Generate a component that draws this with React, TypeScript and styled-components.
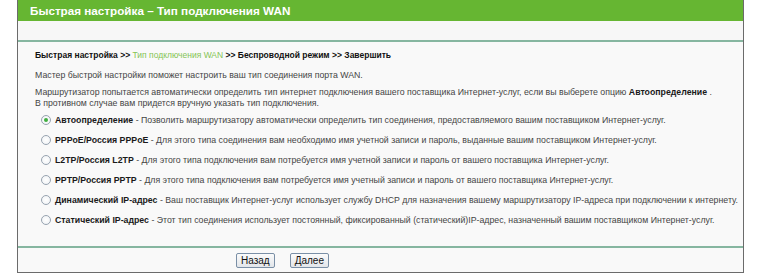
import React, { useState } from "react";
import styled, { createGlobalStyle } from "styled-components";

const Global = createGlobalStyle`
  html, body { margin: 0; padding: 0; background: #ffffff; }
  body { font-family: "Liberation Sans", Arial, sans-serif; }
`;

const Frame = styled.div`
  margin-left: 17px;
  width: 725px;
  border-left: 1px solid #6b6b6b;
  border-right: 1px solid #6b6b6b;
  border-bottom: 1px solid #6b6b6b;
  background: #f9f9f9;
`;

const Title = styled.div`
  height: 21px;
  background: #66b632;
  color: #ffffff;
  font-weight: bold;
  font-size: 11.7px;
  line-height: 21px;
  padding-left: 12px;
`;

const Spacer = styled.div`
  height: 19px;
  background: #f7f7f7;
  border-bottom: 2px solid #86b6a0;
`;

const Content = styled.div`
  padding: 8px 0 20px 17px;
  font-size: 8.75px;
  color: #444444;
  line-height: 11px;
  white-space: nowrap;
`;

const Crumbs = styled.div`
  height: 11px;
  font-size: 8.5px;
  color: #111111;
  font-weight: bold;
`;

const CrumbActive = styled.span`
  color: #84c454;
  font-weight: normal;
`;

const Para = styled.p<{ $gap: number }>`
  margin: ${(p) => p.$gap}px 0 0 0;
  line-height: 11px;
`;

const Bold = styled.b`
  color: #1a1a1a;
`;

const Options = styled.div`
  margin-top: 5px;
  padding-left: 6px;
  display: flex;
  flex-direction: column;
  gap: 8px;
`;

const Option = styled.label`
  display: flex;
  align-items: center;
  height: 12px;
  gap: 4px;
`;

const Radio = styled.span<{ $on: boolean }>`
  width: 8px;
  height: 8px;
  border-radius: 50%;
  border: 1px solid #97a3b0;
  background: radial-gradient(circle, #ffffff 0%, #eef1f4 100%);
  display: flex;
  align-items: center;
  justify-content: center;
  flex: none;
  &::after {
    content: "";
    width: 4px;
    height: 4px;
    border-radius: 50%;
    background: ${(p) => (p.$on ? "#3fae3f" : "transparent")};
  }
`;

const Footer = styled.div`
  border-top: 2px solid #86b6a0;
  height: 24px;
  display: flex;
  align-items: center;
  gap: 15px;
  padding-left: 218px;
`;

const Button = styled.button`
  font-family: "Liberation Sans", Arial, sans-serif;
  font-size: 10px;
  height: 15px;
  padding: 0 4px;
  border: 1px solid #7a8fa6;
  border-radius: 2px;
  background: linear-gradient(#fbfbfb, #e3e6ea);
  color: #111111;
  line-height: 13px;
`;

const options = [
  {
    name: "Автоопределение",
    text: "Позволить маршрутизатору автоматически определить тип соединения, предоставляемого вашим поставщиком Интернет-услуг.",
  },
  {
    name: "PPPoE/Россия PPPoE",
    text: "Для этого типа соединения вам необходимо имя учетной записи и пароль, выданные вашим поставщиком Интернет-услуг.",
  },
  {
    name: "L2TP/Россия L2TP",
    text: "Для этого типа подключения вам потребуется имя учетной записи и пароль от вашего поставщика Интернет-услуг.",
  },
  {
    name: "PPTP/Россия PPTP",
    text: "Для этого типа подключения вам потребуется имя учетный записи и пароль от вашего поставщика Интернет-услуг.",
  },
  {
    name: "Динамический IP-адрес",
    text: "Ваш поставщик Интернет-услуг использует службу DHCP для назначения вашему маршрутизатору IP-адреса при подключении к интернету.",
  },
  {
    name: "Статический IP-адрес",
    text: "Этот тип соединения использует постоянный, фиксированный (статический)IP-адрес, назначенный вашим поставщиком Интернет-услуг.",
  },
];

export default function App() {
  const [sel, setSel] = useState(0);
  return (
    <>
      <Global />
      <Frame>
        <Title>Быстрая настройка – Тип подключения WAN</Title>
        <Spacer />
        <Content>
          <Crumbs>
            Быстрая настройка &gt;&gt; <CrumbActive>Тип подключения WAN</CrumbActive> &gt;&gt; Беспроводной режим &gt;&gt; Завершить
          </Crumbs>
          <Para $gap={9}>Мастер быстрой настройки поможет настроить ваш тип соединения порта WAN.</Para>
          <Para $gap={6}>
            Маршрутизатор попытается автоматически определить тип интернет подключения вашего поставщика Интернет-услуг, если вы выберете опцию <Bold>Автоопределение</Bold> .
            <br />
            В противном случае вам придется вручную указать тип подключения.
          </Para>
          <Options>
            {options.map((o, i) => (
              <Option key={o.name} onClick={() => setSel(i)}>
                <Radio $on={sel === i} />
                <span>
                  <Bold>{o.name}</Bold> - {o.text}
                </span>
              </Option>
            ))}
          </Options>
        </Content>
        <Footer>
          <Button>Назад</Button>
          <Button>Далее</Button>
        </Footer>
      </Frame>
    </>
  );
}
